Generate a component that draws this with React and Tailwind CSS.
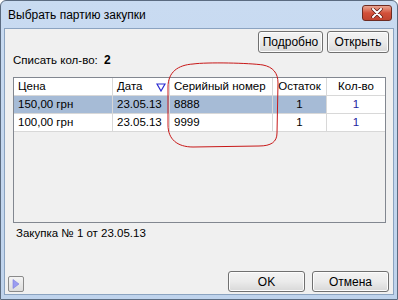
import React from "react";

const F = { fontFamily: '"Liberation Sans", Arial, sans-serif' };

function Btn({ children, className = "" }) {
  return (
    <div
      className={
        "flex items-center justify-center rounded-[3px] border border-[#707070] bg-gradient-to-b from-[#f3f3f3] via-[#ebebeb] to-[#d8d8d8] text-[12px] text-black shadow-[inset_0_0_0_1px_#fcfcfc] " +
        className
      }
    >
      {children}
    </div>
  );
}

export default function App() {
  const rows = [
    { p: "150,00 грн", d: "23.05.13", s: "8888", o: "1", k: "1", sel: true },
    { p: "100,00 грн", d: "23.05.13", s: "9999", o: "1", k: "1", sel: false },
  ];
  const cell = "h-[18px] flex items-center border-r border-b border-[#d8d8d8]";
  return (
    <div style={F} className="w-[398px] h-[300px] bg-white">
      <div className="relative w-[398px] h-[300px] rounded-t-[6px] border border-[#5b6b80] bg-gradient-to-b from-[#c9dbf1] to-[#bfd3ec] flex flex-col">
        {/* title bar */}
        <div className="h-[27px] flex items-center pl-[7px] pr-[4px] shrink-0">
          <span className="text-[12px] text-black">Выбрать партию закупки</span>
          <div className="ml-auto mr-[1px] mt-[-4px] w-[30px] h-[16px] rounded-[3px] border border-[#6d2b22] bg-gradient-to-b from-[#e8a593] via-[#d2503a] to-[#c0442f] flex items-center justify-center">
            <svg width="12" height="10" viewBox="0 0 12 10">
              <path d="M2 1 L10 9 M10 1 L2 9" stroke="#5a1a12" strokeWidth="3.4" strokeLinecap="round" />
              <path d="M2 1 L10 9 M10 1 L2 9" stroke="#ffffff" strokeWidth="2" strokeLinecap="round" />
            </svg>
          </div>
        </div>
        {/* client */}
        <div className="relative mx-[3px] mb-[4px] flex-1 border border-[#8ba3c0] bg-[#f0f0f0] flex flex-col">
          <div className="flex justify-end gap-[4px] pt-[2px] pr-[4px]">
            <Btn className="w-[65px] h-[22px]">Подробно</Btn>
            <Btn className="w-[62px] h-[22px]">Открыть</Btn>
          </div>
          <div className="pl-[8px] mt-[-1px] text-[11.5px] leading-[16px] text-black">
            Списать кол-во:&nbsp; <span className="font-bold text-[12px]">2</span>
          </div>
          {/* grid */}
          <div className="ml-[8px] mr-[7px] mt-[9px] h-[146px] border border-[#828790] bg-[#f0f0f0] text-[11.5px] text-black">
            <div className="flex bg-white">
              <div className={cell + " w-[99px] pl-[4px] border-[#c4c4c4]"}>Цена</div>
              <div className={cell + " w-[57px] pl-[4px] border-[#c4c4c4] relative"}>
                Дата
                <svg className="absolute right-[3px] top-[5px]" width="10" height="9" viewBox="0 0 10 9">
                  <path d="M1 1 H9 L5 8 Z" fill="none" stroke="#2b2bd0" strokeWidth="1.2" />
                </svg>
              </div>
              <div className={cell + " w-[103px] pl-[4px] border-[#c4c4c4]"}>Серийный номер</div>
              <div className={cell + " w-[54px] justify-center border-[#c4c4c4]"}>Остаток</div>
              <div className={cell + " flex-1 justify-center border-r-0 border-[#c4c4c4]"}>Кол-во</div>
            </div>
            {rows.map((r, i) => {
              const bg = r.sel ? "bg-[#a6bbd6]" : "bg-white";
              return (
                <div key={i} className="flex">
                  <div className={cell + " w-[99px] pl-[4px] " + bg}>{r.p}</div>
                  <div className={cell + " w-[57px] pl-[4px] " + bg}>{r.d}</div>
                  <div className={cell + " w-[103px] pl-[4px] " + bg}>{r.s}</div>
                  <div className={cell + " w-[54px] justify-center " + bg}>{r.o}</div>
                  <div className={cell + " flex-1 justify-center border-r-0 bg-white text-[#1e1ea0]"}>{r.k}</div>
                </div>
              );
            })}
          </div>
          <div className="pl-[11px] mt-[2px] text-[11.5px] leading-[16px] text-black">Закупка № 1 от 23.05.13</div>
          <div className="mt-auto flex items-end pb-[2px] pr-[4px]">
            <div className="ml-[3px] mb-[0px] w-[16px] h-[16px] rounded-[2px] border border-[#8a8a8a] bg-gradient-to-b from-[#f4f4f4] to-[#dcdcdc] flex items-center justify-center">
              <svg width="8" height="10" viewBox="0 0 8 10">
                <path d="M1 0.5 L7 5 L1 9.5 Z" fill="#9a9cf0" stroke="#7c7ee0" strokeWidth="0.6" />
              </svg>
            </div>
            <div className="ml-auto flex gap-[7px]">
              <Btn className="w-[77px] h-[21px]">OK</Btn>
              <Btn className="w-[77px] h-[21px]">Отмена</Btn>
            </div>
          </div>
          {/* red annotation */}
          <svg className="absolute left-0 top-0 pointer-events-none" width="392" height="268" viewBox="0 0 392 268">
            <path
              d="M188 35 C 202 33, 245 34, 258 36 C 268 38, 273 44, 273 54 L 272 104 C 272 113, 266 117, 254 117 L 188 118 C 172 118, 163 110, 163 96 L 163 58 C 163 43, 173 36, 188 35 Z"
              fill="none"
              stroke="#c81818"
              strokeWidth="1"
            />
          </svg>
        </div>
      </div>
    </div>
  );
}
